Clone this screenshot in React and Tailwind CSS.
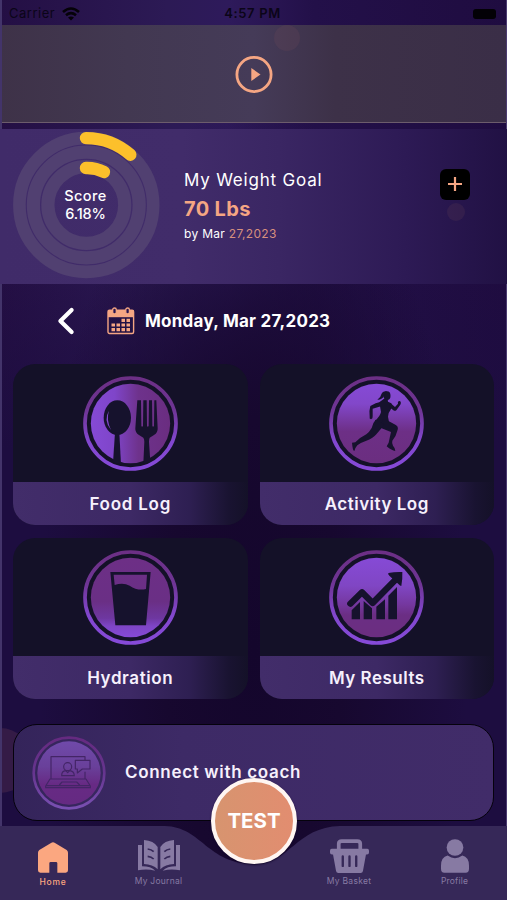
import React from 'react';

const FONT = "font-['Inter','Liberation_Sans',sans-serif]";

const StatusBar = () => (
  <div className="h-[25px] pt-[2px] pl-[9px] pr-[11px] flex items-center justify-between text-[13px] text-[#0b0518]">
    <div className="w-[100px] flex items-center gap-[7px]">
      <span className="tracking-[0.5px]">Carrier</span>
      <svg width="18" height="14" viewBox="0 0 18 14" fill="none" stroke="#050208" strokeWidth="2.6">
        <path d="M1 5Q9-2 17 5" />
        <path d="M4 8.2Q9 4 14 8.2" />
        <path d="M9 13.4 6 10.6Q9 8.4 12 10.6Z" fill="#050208" stroke="none" />
      </svg>
    </div>
    <span className="font-semibold tracking-[0.65px]">4:57 PM</span>
    <div className="w-[100px] flex justify-end">
      <div className="w-[23px] h-[10px] rounded-[3px] bg-[#030106]" />
    </div>
  </div>
);

const VideoBanner = () => (
  <div className="h-[98px] flex items-center justify-center border-b border-[#6c5c6c] bg-[linear-gradient(90deg,#3e3248_0%,#423851_25%,#453b58_50%,#3d3148_66%,#3a2e47_100%)]">
    <svg width="38" height="38" viewBox="0 0 38 38">
      <circle cx="19" cy="19.5" r="17.1" fill="none" stroke="#f5a683" strokeWidth="2.8" />
      <path d="M16.3 13v13l9.2-6.5z" fill="#f5a683" />
    </svg>
  </div>
);

const ScoreRings = () => (
  <div className="relative mb-[4px] w-[148px] h-[148px]">
    <svg width="148" height="148" viewBox="0 0 148 148" fill="none">
      <circle cx="74.3" cy="74" r="66.9" stroke="#514071" strokeWidth="12.6" />
      <circle cx="74.3" cy="74" r="52.9" stroke="#514071" strokeWidth="13.2" />
      <circle cx="74.3" cy="74" r="38.4" stroke="#514071" strokeWidth="13.2" />
      <path d="M74 7.1A67 67 0 0 1 118.3 23.7" stroke="#fcc02b" strokeWidth="12.4" strokeLinecap="round" />
      <path d="M74 37A37.3 37.3 0 0 1 92 41" stroke="#fcc02b" strokeWidth="12.4" strokeLinecap="round" />
    </svg>
    <div className="absolute inset-0 pr-px flex flex-col items-center justify-center text-white text-[14.5px] leading-[17.5px] font-medium">
      <span className="tracking-[0.4px]">Score</span>
      <span className="tracking-[-0.2px]">6.18%</span>
    </div>
  </div>
);

const WeightGoal = () => (
  <div className="relative mt-[6px] h-[155px] pl-[12px] pr-[37px] flex items-center bg-[linear-gradient(90deg,#402b69_0%,#412c6a_36%,#3a2663_55%,#2d1a55_80%,#211144_100%)]">
    <ScoreRings />
    <div className="ml-[24px] pb-px flex-1 text-white">
      <div className="text-[17px] leading-[24px] tracking-[0.8px]">My Weight Goal</div>
      <div className="mt-[4px] text-[20px] leading-[26px] font-bold text-[#f5a683] tracking-[0.35px]">70 Lbs</div>
      <div className="mt-[2px] text-[12px] leading-[20px] tracking-[0.3px]">
        by Mar <span className="text-[#d6907e]">27,2023</span>
      </div>
    </div>
    <button className="mb-[45px] w-[30px] h-[31px] rounded-[6px] bg-black flex items-center justify-center">
      <svg width="14" height="14" viewBox="0 0 14 14" stroke="#f5a683" strokeWidth="2.2">
        <path d="M7 0v14M0 7h14" />
      </svg>
    </button>
  </div>
);

const DateRow = () => (
  <div className="h-[80px] pl-[57px] pb-[6px] flex items-center">
    <svg width="18" height="28" viewBox="0 0 18 28" fill="none" stroke="#fff" strokeWidth="4.2" strokeLinecap="round" strokeLinejoin="round">
      <path d="M14.6 3 3.4 14l11.2 11" />
    </svg>
    <svg className="ml-[32px]" width="28" height="28" viewBox="0 0 28 28" fill="none" stroke="#f5a683">
      <rect x="1" y="3.2" width="25.6" height="23.3" rx="1.5" strokeWidth="1.4" />
      <path d="M1 3h25.6v7.2H1z" fill="#f5a683" stroke="none" />
      <rect x="5.7" y="1" width="3.6" height="6" rx="1.8" fill="#271450" strokeWidth="1.3" />
      <rect x="18.8" y="1" width="3.6" height="6" rx="1.8" fill="#271450" strokeWidth="1.3" />
      <path
        d="M14.5 13.4H18M19.5 13.4H23M4.5 18H8M9.5 18H13M14.5 18H18M19.5 18H23M4.5 22.6H8M9.5 22.6H13M14.5 22.6H18M19.5 22.6H23"
        strokeWidth="3.2"
      />
    </svg>
    <span className="ml-[10px] pt-[2px] text-[17px] font-bold text-white tracking-[0.25px]">Monday, Mar 27,2023</span>
  </div>
);

// Round badge shared by the four log cards
const Badge = ({ id, horizontal, stops, children }) => (
  <svg width="95" height="95" viewBox="0 0 285 285" fill="#16122d">
    <defs>
      <linearGradient id={`${id}-disc`} x1="0" y1="0" x2={horizontal ? 1 : 0} y2={horizontal ? 0 : 1}>
        {stops.map(([offset, color]) => (
          <stop key={offset} offset={offset} stopColor={color} />
        ))}
      </linearGradient>
      <linearGradient id={`${id}-ring`} x1="0" y1="0" x2="0" y2="1">
        <stop offset="0" stopColor="#6c2f85" />
        <stop offset="0.35" stopColor="#6f3595" />
        <stop offset="0.7" stopColor="#8247cf" />
        <stop offset="1" stopColor="#864ad8" />
      </linearGradient>
    </defs>
    <circle cx="142.5" cy="142.5" r="136.5" fill="none" stroke={`url(#${id}-ring)`} strokeWidth="11" />
    <circle cx="142.5" cy="142.5" r="119" fill={`url(#${id}-disc)`} />
    {children}
  </svg>
);

const FoodIcon = () => (
  <Badge id="food" horizontal stops={[[0, '#854ad6'], [0.3, '#7f45c9'], [0.6, '#6e328c'], [1, '#6a2d80']]}>
    <ellipse cx="103" cy="125" rx="41" ry="52" />
    <path d="M96 170 90 259Q101 265 114 264L109 170Z" />
    <path d="M78 104Q60 132 84 162Q69 130 78 104Z" fill="#8248cd" />
    <path d="M163 73h11l1 77q2 5 5 0l1-77h10l1 77q2 5 5 0l1-77h9l1 77q2 5 5 0l1-77h6l4 84q1 13-11 20l-13 8q-2 4-2 12l4 61q-11 4-21 4l3-65q0-8-3-12l-13-8q-12-7-11-20Z" />
  </Badge>
);

const RunnerIcon = () => (
  <Badge id="run" stops={[[0, '#864ad6'], [0.25, '#8247ca'], [0.6, '#6d2f86'], [1, '#6b2e80']]}>
    <g transform="translate(-14 -11)">
      <ellipse cx="188" cy="70" rx="10.5" ry="13" />
      <path d="M188 57Q175 55 171 66Q169 77 159 82Q172 83 179 72Z" />
      <path d="M178 80h12l1 8 10 5q4 11-3 21-7 8-7 19l3 16-31 5-11-9q15-12 18-26l-5-29Z" />
      <path d="M170 88Q154 90 138 101Q133 118 136 133Q134 140 140 141Q146 139 145 132L145 109L170 102Z" />
      <path d="M198 92 212 104 221 94Q219 87 226 86Q232 89 228 97L216 114Q212 117 207 114L195 104Z" />
      <path d="M176 140Q190 144 213 157Q223 162 220 172Q216 190 204 205Q202 211 206 220Q213 227 213 236Q202 235 187 222L193 211Q197 192 200 179L168 166Z" />
      <path d="M154 142 180 155Q170 171 156 186Q145 199 126 205Q108 211 99 219Q92 227 90 236Q85 236 83 211L93 210Q109 194 126 186Q135 179 142 167Q146 150 154 142Z" />
    </g>
  </Badge>
);

const GlassIcon = () => (
  <Badge id="glass" stops={[[0, '#6d2f86'], [0.55, '#6a2f85'], [0.76, '#6e37a0'], [0.86, '#7e45c6'], [1, '#864ad6']]}>
    <path
      fillRule="evenodd"
      d="M82 66h121l-14 160H97ZM92 74l3 31q26-8 45 2 23 16 49 10l3-43Z"
    />
  </Badge>
);

const ResultsIcon = () => (
  <Badge id="results" stops={[[0, '#864ad6'], [0.35, '#8046c4'], [0.58, '#7538a0'], [0.72, '#6b2e84'], [1, '#6b2e80']]}>
    <path d="M64 161 99 127 131 159 198 91" fill="none" stroke="#16122d" strokeWidth="19" strokeLinejoin="round" strokeLinecap="round" />
    <path d="M178 69q20-4 42-3 1 22-3 42-4 0-8-5l-28-26q-5-4-3-8Z" />
    <path d="M68 181l25-25v52H68ZM104 153l25 22v33h-25ZM142 170l26-22v60h-26ZM178 137l26-26v97h-26Z" />
  </Badge>
);

const CARDS = [
  { label: 'Food Log', icon: <FoodIcon />, tracking: 'tracking-[0.75px]' },
  { label: 'Activity Log', icon: <RunnerIcon />, tracking: 'tracking-[0.5px]' },
  { label: 'Hydration', icon: <GlassIcon />, tracking: 'tracking-[0.6px]' },
  { label: 'My Results', icon: <ResultsIcon />, tracking: 'tracking-[0.5px]' },
];

const LogCard = ({ label, icon, tracking }) => (
  <div className="h-[161px] rounded-[22px] overflow-hidden bg-[#141128] flex flex-col">
    <div className="h-[118px] pt-[12px] flex justify-center">{icon}</div>
    <div className="flex-1 pt-[3px] flex items-center justify-center bg-[linear-gradient(90deg,#422d6a_0%,#3d2965_50%,#2e1f52_75%,#191331_92%,#141128_100%)]">
      <span className={`text-[17px] font-semibold text-[#f6f0fc] ${tracking}`}>{label}</span>
    </div>
  </div>
);

const CoachIcon = () => (
  <svg width="74" height="74" viewBox="0 0 222 222" fill="none">
    <defs>
      <linearGradient id="coach-disc" x1="0" y1="0" x2="0" y2="1">
        <stop offset="0" stopColor="#704aaa" />
        <stop offset="0.4" stopColor="#69409a" />
        <stop offset="0.68" stopColor="#672a84" />
        <stop offset="1" stopColor="#652a82" />
      </linearGradient>
      <linearGradient id="coach-ring" x1="0" y1="0" x2="0" y2="1">
        <stop offset="0" stopColor="#652a80" />
        <stop offset="0.5" stopColor="#66358f" />
        <stop offset="1" stopColor="#7950b2" />
      </linearGradient>
    </defs>
    <circle cx="111" cy="111" r="106" stroke="url(#coach-ring)" strokeWidth="8" />
    <circle cx="111" cy="111" r="95" fill="url(#coach-disc)" />
    <g stroke="#432566" strokeWidth="3.5" strokeLinejoin="round">
      <path d="M57 128V62H159V74M159 107V128M54 129H162L175 150V155H41V150ZM41 149H175M82 147L90 138H134L143 147" />
      <path d="M130 73H174V99H151L136 111V99H130Z" />
      <circle cx="107" cy="92" r="12" />
      <path d="M89 119Q89 105 101 104L107 110L113 104Q126 105 127 119Z" />
    </g>
  </svg>
);

const CoachCard = () => (
  <div className="mx-[13px] mt-[25px] h-[97px] pl-[18px] rounded-[24px] border-[1.5px] border-[#05020c] bg-[linear-gradient(90deg,#34245a_0%,#3d2a66_35%,#412c69_100%)] flex items-center">
    <CoachIcon />
    <span className="ml-[19px] pt-px text-[17px] font-semibold text-[#f6f0fc] tracking-[0.68px]">Connect with coach</span>
  </div>
);

const HomeIcon = () => (
  <svg width="30" height="31" viewBox="0 0 90 93" fill="#fba780">
    <path d="M39 3q6-4 12 0l35 21q4 3 4 8v53q0 7-7 7H58V64q0-4-4-4H38q-4 0-4 4v28H7q-7 0-7-7V32q0-5 4-8Z" />
  </svg>
);

const JournalIcon = () => (
  <svg width="42" height="32" viewBox="0 0 126 96" fill="#877aa3">
    <path d="M18 0q29 2 41 21v67Q44 73 18 72ZM108 0Q79 2 67 21v67q15-15 41-16Z" />
    <path d="M0 15h12v64q27 0 40 13Q26 86 0 91ZM126 15h-12v64q-27 0-40 13 25-6 52-1Z" />
    <path d="M29 27q11 1 18 8M29 49q11 1 18 8M97 27q-11 1-18 8M97 49q-11 1-18 8" fill="none" stroke="#362858" strokeWidth="5" />
  </svg>
);

const BasketIcon = () => (
  <svg width="39" height="34" viewBox="0 0 116 101">
    <path d="M26 31V14q0-8 9-8h46q9 0 9 8v17" fill="none" stroke="#877aa3" strokeWidth="11" />
    <path d="M5 29h106q5 0 5 6v5q0 6-6 6h-3l-9 49q-1 6-7 6H25q-6 0-7-6L9 46H6q-6 0-6-6v-5q0-6 5-6Z" fill="#877aa3" />
    <path d="M38 52v28M58 52v28M78 52v28" stroke="#362858" strokeWidth="7" strokeLinecap="round" />
  </svg>
);

const ProfileIcon = () => (
  <svg width="28" height="34" viewBox="0 0 84 101" fill="#877aa3">
    <circle cx="42" cy="25" r="25" />
    <path d="M20 49q22 16 44 0 20 5 20 30v10q0 12-10 12H10Q0 101 0 89V79q0-25 20-30Z" />
  </svg>
);

const NavItem = ({ icon, label, className }) => (
  <div className={`flex flex-col items-center ${className}`}>
    <div className="h-[34px] flex items-center">{icon}</div>
    <span className="mt-[2px] text-[8.5px] leading-[12px] whitespace-nowrap">{label}</span>
  </div>
);

const BottomNav = () => (
  <div className="relative mt-[5px] h-[74px]">
    <svg className="absolute inset-0" width="507" height="74" viewBox="0 0 507 74">
      <path d="M0 0H165C202 1 207 38 254 38C290 38 296 1 340 0H507V74H0Z" fill="#362858" />
    </svg>
    <div className="relative pt-[13px] flex">
      <NavItem icon={<HomeIcon />} label="Home" className="w-[106px] pt-px text-[#fba780] font-medium tracking-[0.7px]" />
      <NavItem icon={<JournalIcon />} label="My Journal" className="w-[105px] text-[#877aa3] tracking-[0.25px]" />
      <NavItem icon={<BasketIcon />} label="My Basket" className="ml-[85px] w-[106px] text-[#877aa3] tracking-[0.3px]" />
      <NavItem icon={<ProfileIcon />} label="Profile" className="w-[105px] text-[#877aa3] tracking-[0.2px]" />
    </div>
    <button className="absolute left-[211px] top-[-48px] w-[86px] h-[86px] rounded-full border-[4.5px] border-[#fff6f2] bg-[linear-gradient(90deg,#d7946f,#e28d70)] shadow-[0_1px_2px_#12062a] text-white text-[20.5px] font-bold">
      TEST
    </button>
  </div>
);

export default function App() {
  return (
    <div className={`relative w-[507px] h-[900px] overflow-hidden bg-[#1b0a3b] bg-[radial-gradient(ellipse_at_50%_72%,#14062c_0%,#17082f_25%,transparent_60%),linear-gradient(180deg,transparent_0%,transparent_30%,#1d0d40_50%,#1d0d40_100%),linear-gradient(90deg,#240f44_0%,#2c1a55_33%,#2e1a5b_45%,#231049_62%,#1f0c40_100%)] ${FONT}`}>
      <StatusBar />
      <VideoBanner />
      {/* decorative bubbles and edge lines */}
      <div className="absolute left-[274px] top-[25px] w-[26px] h-[26px] rounded-full bg-[#6a4656]/25" />
      <div className="absolute left-0 top-[728px] w-[32px] h-[65px] rounded-r-full bg-[#6a3d56]/30" />
      <div className="absolute left-0 top-0 w-[2px] h-[826px] bg-[#43346a]" />
      <div className="absolute right-0 top-0 w-px h-[826px] bg-[#4b3b70]" />
      <WeightGoal />
      <div className="absolute left-[447px] top-[203px] w-[18px] h-[18px] rounded-full bg-[#6a4656]/20" />
      <DateRow />
      <div className="px-[13px] grid grid-cols-2 gap-x-[12px] gap-y-[13px]">
        {CARDS.map((card) => (
          <LogCard key={card.label} {...card} />
        ))}
      </div>
      <div className="relative">
        <CoachCard />
      </div>
      <BottomNav />
    </div>
  );
}
